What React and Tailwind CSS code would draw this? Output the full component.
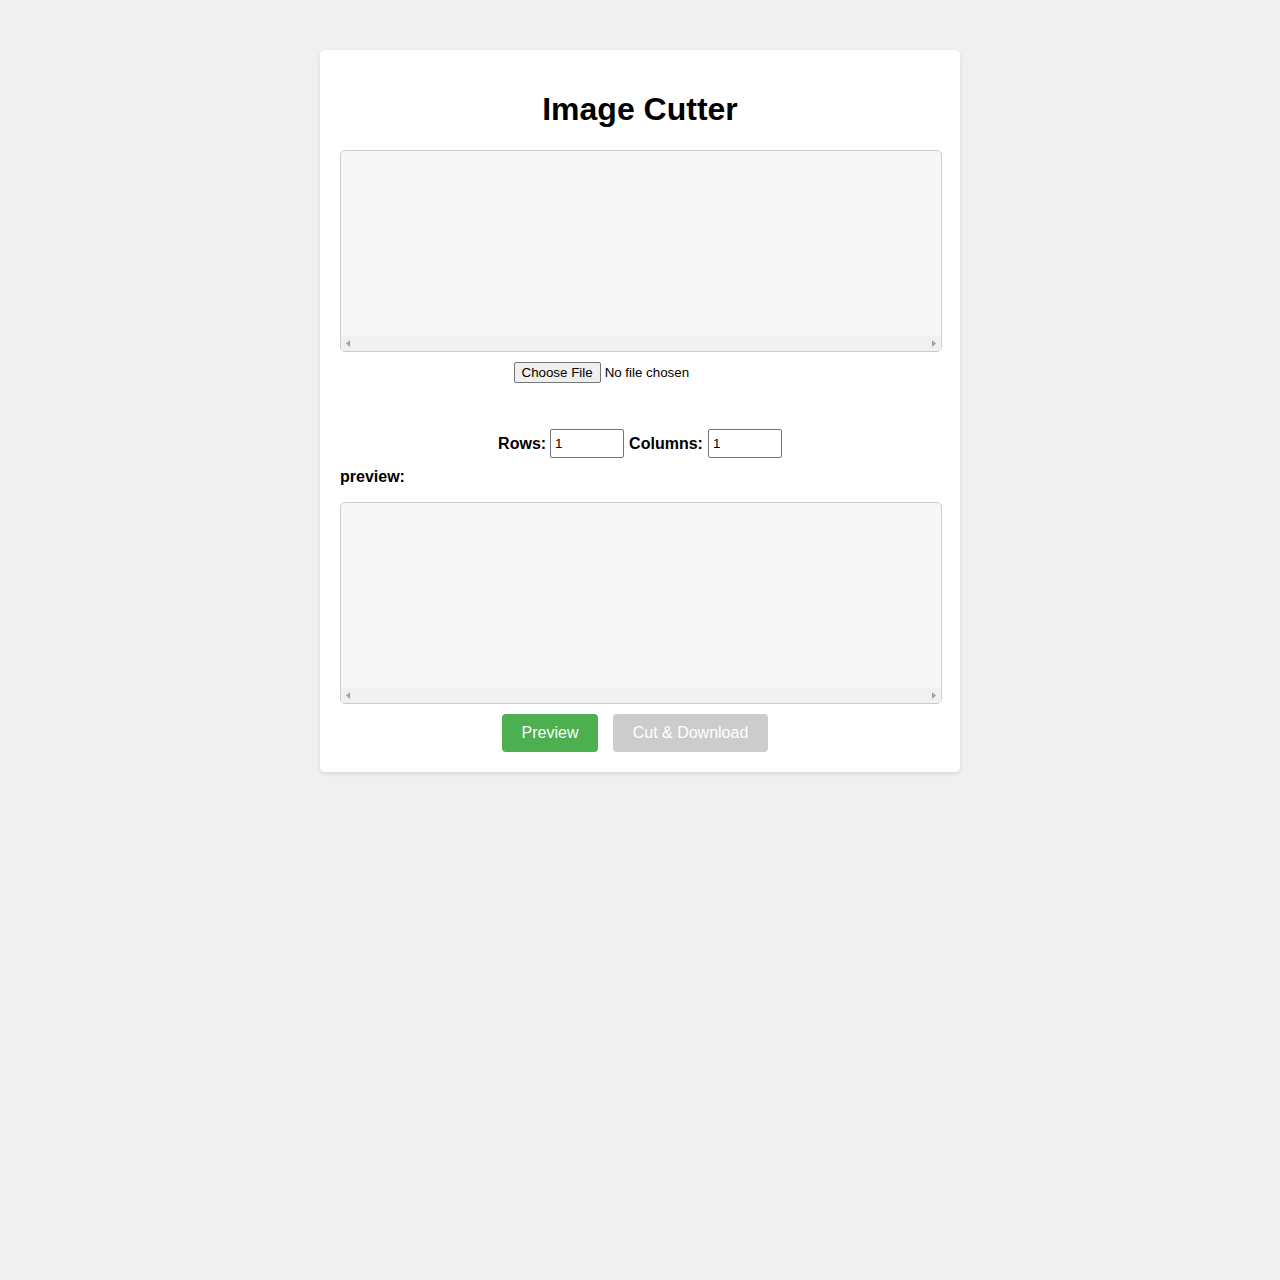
function ScrollBox({ className = "" }) {
  return (
    <div className={`w-[602px] h-[202px] border border-[#ccc] rounded-[5px] bg-[#f7f7f7] overflow-hidden flex flex-col ${className}`}>
      <div className="flex-1" />
      {/* horizontal scrollbar track */}
      <div className="h-[15px] bg-[#f1f1f1] flex items-center justify-between px-[5px]">
        <svg width="4" height="7" viewBox="0 0 4 7">
          <path d="M4 0 L0 3.5 L4 7 Z" fill="#a3a3a3" />
        </svg>
        <svg width="4" height="7" viewBox="0 0 4 7">
          <path d="M0 0 L4 3.5 L0 7 Z" fill="#a3a3a3" />
        </svg>
      </div>
    </div>
  );
}

export default function App() {
  return (
    <div className="min-h-screen bg-[#f0f0f0] pt-[50px] font-['Liberation_Sans',Arial,sans-serif] text-black">
      <div className="w-[640px] mx-auto bg-white rounded-[5px] shadow-[0_2px_4px_rgba(0,0,0,0.1)] p-5">
        <h1 className="text-[32px] leading-[37px] font-bold text-center mt-[21px] mb-[22px]">Image Cutter</h1>

        {/* source image */}
        <ScrollBox />
        <input
          type="file"
          className="block mx-auto mt-[10px] w-[253px] h-[21px] text-[13.33px] text-black file:mr-[4px] file:h-[21px] file:px-[7px] file:bg-[#efefef] file:text-black file:border file:border-[#767676] file:rounded-[2px] file:text-[13.33px]"
        />

        <div className="mt-[46px] flex items-center justify-center gap-1 text-base font-bold">
          <label>Rows:</label>
          <input
            type="number"
            defaultValue={1}
            className="w-[74px] h-[29px] border border-[#767676] rounded-[2px] px-[4px] text-[13.33px] text-black font-normal"
          />
          <label className="ml-px">Columns:</label>
          <input
            type="number"
            defaultValue={1}
            className="ml-px w-[74px] h-[29px] border border-[#767676] rounded-[2px] px-[4px] text-[13.33px] text-black font-normal"
          />
        </div>

        <p className="mt-[10px] text-base leading-[18px] font-bold">preview:</p>

        {/* preview of pieces */}
        <ScrollBox className="mt-[16px]" />

        <div className="mt-[10px] flex justify-center gap-[15px] pr-[10px]">
          <button className="h-[38px] w-[96px] rounded-[4px] bg-[#4CAF50] text-white text-base">Preview</button>
          <button disabled className="h-[38px] w-[155px] rounded-[4px] bg-[#ccc] text-white text-base">Cut &amp; Download</button>
        </div>
      </div>
    </div>
  );
}
